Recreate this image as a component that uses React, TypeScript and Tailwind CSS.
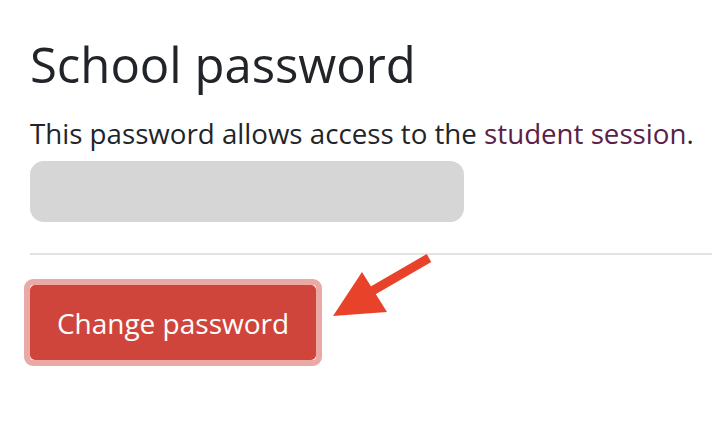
import React from "react";

export default function App() {
  return (
    <div className="relative w-[712px] h-[434px] bg-white overflow-hidden" style={{ fontFamily: "'Open Sans', 'Noto Sans', sans-serif" }}>
      <div className="pl-[30px] pt-[34px]">
        <h1 className="text-[49px] leading-[60px] text-[#212529] font-normal">School password</h1>
        <p className="mt-[22px] text-[27.7px] leading-[34px] text-[#212529]">
          This password allows access to the <span className="text-[#5b2048]">student session</span>.
        </p>
        <div className="mt-[11px] w-[434px] h-[61px] rounded-[14px] bg-[#d6d6d6]" />
        <div className="mt-[31px] h-[2px] bg-[#e3e3e3]" />
        <div className="mt-[24px] ml-[-6px] inline-flex rounded-[9px] border-[6px] border-[#eba9a6]">
          <button className="w-[286px] h-[75px] rounded-[5px] bg-[#d0453b] text-white text-[28px] leading-[34px]">Change password</button>
        </div>
      </div>
      <svg className="absolute left-[320px] top-[245px]" width="120" height="80" viewBox="320 245 120 80">
        <line x1="429" y1="258" x2="360" y2="298" stroke="#e8432a" strokeWidth="9" />
        <polygon points="333,316 362,272 387,312" fill="#e8432a" />
      </svg>
    </div>
  );
}
